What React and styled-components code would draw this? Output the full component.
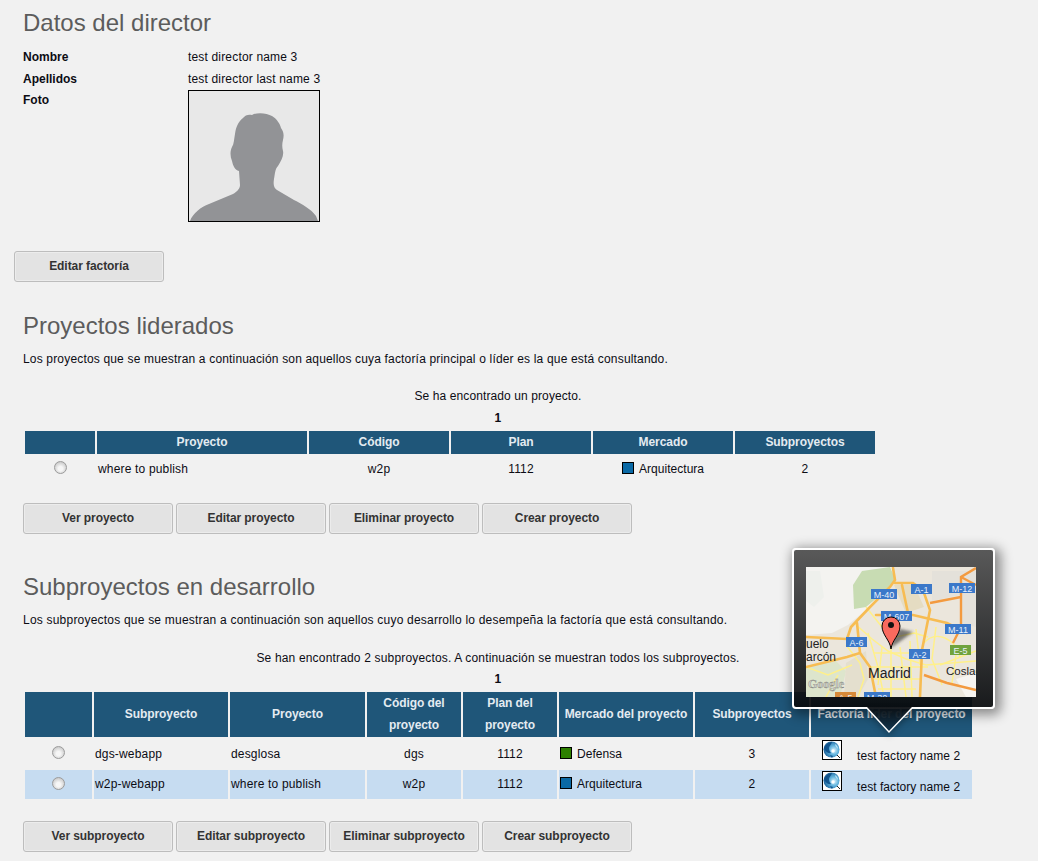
import React from 'react';
import styled, { createGlobalStyle } from 'styled-components';

const Global = createGlobalStyle`
  html, body { margin: 0; padding: 0; background: #f1f1f1; }
  body { font-family: "Liberation Sans", Arial, sans-serif; font-size: 12px; color: #0c0c14; letter-spacing: .17px; }
  svg { letter-spacing: 0; }
`;
const Page = styled.div`
  position: relative;
  width: 1038px;
  height: 861px;
  overflow: hidden;
  padding: 9px 0 0 14px;
  box-sizing: border-box;
`;
const Content = styled.div`
  width: 950px;
  margin-left: 9px;
`;
const Title = styled.h2`
  margin: ${p => p.$top || 0}px 0 0;
  font-size: 24px;
  line-height: 28px;
  font-weight: normal;
  letter-spacing: 0;
  color: #5c5c5c;
`;
const Details = styled.div`
  display: grid;
  grid-template-columns: 165px 1fr;
  grid-auto-rows: 22px;
  margin-top: 9px;
  align-items: center;
`;
const Label = styled.div`
  font-weight: bold;
  letter-spacing: 0;
  line-height: 22px;
`;
const Value = styled.div`
  line-height: 22px;
`;
const PhotoRow = styled.div`
  display: grid;
  grid-template-columns: 165px 1fr;
`;
const FotoLabel = styled.div`
  font-weight: bold;
  letter-spacing: 0;
  line-height: 20px;
`;
const PhotoFrame = styled.div`
  width: 130px;
  height: 130px;
  border: 1px solid #000;
  background: #e8e8e8;
  svg { display: block; }
`;
const Buttons = styled.div`
  display: flex;
  gap: 3px;
  margin-top: ${p => p.$top}px;
`;
const Button = styled.button`
  width: 150px;
  height: 31px;
  box-sizing: border-box;
  padding: 0 0 2px;
  border: 1px solid #bdbdbd;
  border-radius: 3px;
  background: #e3e3e3;
  box-shadow: inset 0 0 0 1px #ececec;
  color: #333;
  font: bold 12px "Liberation Sans", Arial, sans-serif;
  letter-spacing: -.07px;
`;
const Intro = styled.p`
  margin: 11px 0 0;
  line-height: 16px;
  letter-spacing: ${p => p.$spacing}px;
`;
const Count = styled.div`
  margin-top: ${p => p.$top}px;
  text-align: center;
  line-height: 16px;
  letter-spacing: ${p => p.$spacing}px;
`;
const PageNum = styled.div`
  margin-top: ${p => p.$top}px;
  text-align: center;
  font-weight: bold;
  line-height: 16px;
`;
const Table = styled.table`
  border-collapse: separate;
  border-spacing: 2px;
  table-layout: fixed;
  width: ${p => p.$width}px;
  margin-top: 3px;
`;
const Th = styled.th`
  background: #1f5679;
  color: #e4ebf1;
  font-size: 12px;
  font-weight: bold;
  letter-spacing: -.07px;
  line-height: 22px;
  padding: 0 0 1px;
  text-align: center;
`;
const Tr = styled.tr`
  background: ${p => (p.$alt ? '#c6dcf1' : 'transparent')};
`;
const Td = styled.td`
  height: ${p => p.$h}px;
  padding: 0 0 ${p => (p.$lift ? 2 : 0)}px ${p => (p.$center ? 0 : 1)}px;
  box-sizing: border-box;
  text-align: ${p => (p.$center ? 'center' : 'left')};
  vertical-align: ${p => (p.$top ? 'top' : 'middle')};
  font-size: 12px;
  background: inherit;
`;
const Radio = styled.span`
  display: block;
  width: 13px;
  height: 13px;
  margin: -3px auto 0;
  border-radius: 50%;
  box-sizing: border-box;
  border: 1px solid #9b9b9b;
  background: radial-gradient(circle at 50% 60%, #f6f6f6 0 25%, #c4c4c4 85%);
`;
const Market = styled.div`
  display: flex;
  align-items: center;
  gap: 5px;
  padding-left: ${p => p.$pad}px;
  letter-spacing: .03px;
`;
const Swatch = styled.span`
  width: 10px;
  height: 10px;
  border: 1px solid #000;
  background: ${p => p.$color};
  margin-top: -2px;
`;
const Factory = styled.div`
  display: flex;
  align-items: flex-start;
  gap: 15px;
  height: 27px;
  padding-left: 10px;
`;
const FactoryName = styled.span`
  padding-top: 10px;
  line-height: 15px;
  letter-spacing: .06px;
`;
const GlobeBox = styled.span`
  display: block;
  width: 20px;
  height: 20px;
  box-sizing: border-box;
  border: 1px solid #000;
  background: #fff;
  margin-top: 1px;
  svg { display: block; }
`;
const Popover = styled.div`
  position: absolute;
  left: 792px;
  top: 548px;
  width: 203px;
  height: 161px;
  box-sizing: border-box;
  padding: 17px 0 0 12px;
  border: 2px solid #fff;
  border-radius: 4px;
  background: linear-gradient(rgba(84,84,84,.97), rgba(8,10,12,.93));
  box-shadow: 3px 3px 12px 3px rgba(0,0,0,.42);
  svg { display: block; }
`;
const Arrow = styled.svg`
  position: absolute;
  left: 864px;
  top: 707px;
  filter: drop-shadow(0 3px 3px rgba(0,0,0,.3));
`;

const Silhouette = () => (
  <svg width="130" height="130" viewBox="0 0 130 130">
    <path fill="#929396" d="M1 130C4 122 12 116 20 113L44 103C49 100 51 97 51 94L50 80C46 79 44 75 43 70C41 65 41 60 43 56C45 53 45 48 46 43C47 36 49 31 54 27C56 24 60 23 63 24C68 21 78 22 83 25C88 28 91 33 92 37C95 41 95 45 94 49C93 53 93 56 94 60C95 65 92 70 89 75C86 78 86 83 85 88C84 94 85 97 88 99L105 109C113 113 122 118 127 125L129 130Z" />
  </svg>
);

const Globe = () => (
  <svg width="18" height="18" viewBox="0 0 18 18">
    <defs>
      <radialGradient id="gl" cx="65%" cy="55%" r="70%">
        <stop offset="0" stopColor="#dff3fb" />
        <stop offset=".4" stopColor="#62b4de" />
        <stop offset="1" stopColor="#0a4f8a" />
      </radialGradient>
    </defs>
    <circle cx="8.5" cy="8.5" r="8" fill="url(#gl)" />
    <path d="M1 7c2-4 5-6 8-6-1 3-3 4-3 6s1 4 2 5c-3 1-6-2-7-5zM7 14l3 1-1 2z" fill="#094a85" opacity=".85" />
    <path d="M12 3c2 1 3 3 3 5-1-1-3-3-3-5z" fill="#b8e2f5" />
    <circle cx="10" cy="10" r="1.7" fill="#fff" />
    <path d="M14 14l3 3" stroke="#222" strokeWidth="1" />
  </svg>
);

const Shield = ({ x, y, w, t, fill = '#3b78c9', h = 10 }) => (
  <g>
    <rect x={x} y={y} width={w} height={h} fill={fill} />
    <text x={x + w / 2} y={y + 8.5} textAnchor="middle" fontSize="9" fill="#e8f0fa" fontFamily="Liberation Sans, Arial, sans-serif">{t}</text>
  </g>
);

const MapImage = () => (
  <svg width="170" height="130" viewBox="0 0 170 130">
    <defs>
      <filter id="soft"><feGaussianBlur stdDeviation="1.4" /></filter>
    </defs>
    <rect width="170" height="130" fill="#ebe6dc" />
    <path d="M0 0H88L66 38 42 58 26 66 0 68Z" fill="#f4f3f0" />
    <path d="M47 18L56 4 84 0 90 14 72 30 60 40 48 42Z" fill="#c8dcb3" />
    <path d="M0 4H14L18 30 8 40 0 34Z" fill="#eef0ec" />
    <path d="M0 100L30 94 40 104 34 130H0Z" fill="#dde5cc" />
    <path d="M88 18L108 18 118 40 100 46Z" fill="#e5dcc2" />
    <path d="M126 4H170V60L156 56 154 28 126 34Z" fill="#e4e1da" />
    <path d="M150 112L170 106V130H160Z" fill="#f6f4f0" />
    <path d="M40 96L60 84 62 112 52 130H38Z" fill="#e4dfce" />
    <g fill="none" stroke="#fff08a" strokeWidth="1.5">
      <path d="M40 78L54 96 58 112 52 130" />
      <path d="M48 56L66 72 82 84 100 92 120 98 170 94" />
      <path d="M62 66L72 100 78 130" />
      <path d="M85 76V130" />
      <path d="M68 86H118M64 100H122M66 112H114M72 122H110" />
      <path d="M94 80L100 130" />
      <path d="M76 80L72 118M104 74L106 130" />
      <path d="M110 62L114 98" />
      <path d="M118 76C130 62 150 72 154 90" />
      <path d="M0 100L22 108 46 98" />
      <path d="M20 130L32 108" />
      <path d="M126 92L136 118M150 88L146 116M134 98L170 84" />
      <path d="M76 60L90 70 108 66 122 70" />
      <path d="M130 60L126 92" />
      <path d="M60 40L76 60" />
    </g>
    <g fill="none" stroke="#f7bc52" strokeWidth="2.6" strokeLinecap="round">
      <path d="M0 70L41 72 45 60 64 40 84 20 89 13 87 1" />
      <path d="M89 16H107L117 23 124 43 116 83 114 130" />
      <path d="M51 56L54 86 64 100 70 130" />
      <path d="M70 48L107 48 141 56 161 66" />
      <path d="M0 100L41 90 54 86" />
      <path d="M96 18L102 46" />
    </g>
    <g fill="none" stroke="#f39a3f" strokeWidth="2.4">
      <path d="M170 1L155 10V60L147 76" />
      <path d="M124 36L155 30" />
      <path d="M141 116L170 123M118 108L141 116" />
      <path d="M155 10L170 18" />
    </g>
    <path d="M85 81L107 65 94 62 88 68Z" fill="#2c2c2c" opacity=".6" filter="url(#soft)" />
    <Shield x={65} y={22} w={26} t="M-40" />
    <Shield x={105} y={17} w={21} t="A-1" />
    <Shield x={143} y={16} w={26} t="M-12" />
    <Shield x={75} y={44} w={31} t="M-607" />
    <Shield x={139} y={57} w={26} t="M-11" />
    <Shield x={40} y={70} w={21} t="A-6" />
    <Shield x={144} y={78} w={21} t="E-5" fill="#70a33d" />
    <Shield x={103} y={82} w={21} t="A-2" />
    <Shield x={29} y={125} w={21} t="A-5" fill="#d68a3a" />
    <Shield x={58} y={125} w={26} t="M-30" />
    <g fontFamily="Liberation Sans, Arial, sans-serif" fill="#222">
      <text x="0" y="81" fontSize="12">uelo</text>
      <text x="0" y="94" fontSize="12">arcón</text>
      <text x="62" y="111" fontSize="14">Madrid</text>
      <text x="140" y="108" fontSize="11.5">Coslad</text>
    </g>
    <text x="2" y="121" fontSize="12" fontWeight="bold" fontFamily="Liberation Serif, serif" fill="#d5d5d0" stroke="#7f7f7a" strokeWidth=".4">Google</text>
    <path d="M85 82C84 73 76 68 76 59A9 9 0 0 1 94 59C94 68 86 73 85 82Z" fill="#f96a5e" stroke="#000" strokeWidth="1" />
    <circle cx="85" cy="58" r="3" fill="#111" />
  </svg>
);

const projectCols = [70, 210, 140, 140, 140, 140];
const subCols = [67, 134, 135, 94, 94, 134, 114, 161];

const Colgroup = ({ cols }) => (
  <colgroup>{cols.map((w, i) => <col key={i} style={{ width: w }} />)}</colgroup>
);

const SubRow = ({ alt, name, project, code, market, color, subs, h }) => (
  <Tr $alt={alt}>
    <Td $h={h} $center><Radio /></Td>
    <Td $h={h} $lift={alt}>{name}</Td>
    <Td $h={h} $lift={alt}>{project}</Td>
    <Td $h={h} $center $lift={alt}>{code}</Td>
    <Td $h={h} $center $lift={alt}>1112</Td>
    <Td $h={h} $lift={alt}><Market $pad={0}><Swatch $color={color} />{market}</Market></Td>
    <Td $h={h} $center $lift={alt}>{subs}</Td>
    <Td $h={h} $top><Factory><GlobeBox><Globe /></GlobeBox><FactoryName>test factory name 2</FactoryName></Factory></Td>
  </Tr>
);

export default function App() {
  return (
    <Page>
      <Global />
      <Content>
        <Title>Datos del director</Title>
        <Details>
          <Label>Nombre</Label><Value>test director name 3</Value>
          <Label>Apellidos</Label><Value>test director last name 3</Value>
        </Details>
        <PhotoRow>
          <FotoLabel>Foto</FotoLabel>
          <PhotoFrame><Silhouette /></PhotoFrame>
        </PhotoRow>
      </Content>
      <Buttons $top={29}><Button>Editar factoría</Button></Buttons>
      <Content>
        <Title $top={30}>Proyectos liderados</Title>
        <Intro $spacing={0.17}>Los proyectos que se muestran a continuación son aquellos cuya factoría principal o líder es la que está consultando.</Intro>
        <Count $top={21} $spacing={0.1}>Se ha encontrado un proyecto.</Count>
        <PageNum $top={6}>1</PageNum>
        <Table $width={854}>
          <Colgroup cols={projectCols} />
          <thead>
            <tr>
              <Th /><Th>Proyecto</Th><Th>Código</Th><Th>Plan</Th><Th>Mercado</Th><Th>Subproyectos</Th>
            </tr>
          </thead>
          <tbody>
            <Tr>
              <Td $h={25} $center><Radio /></Td>
              <Td $h={25}>where to publish</Td>
              <Td $h={25} $center>w2p</Td>
              <Td $h={25} $center>1112</Td>
              <Td $h={25}><Market $pad={28}><Swatch $color="#0a69a5" />Arquitectura</Market></Td>
              <Td $h={25} $center>2</Td>
            </Tr>
          </tbody>
        </Table>
        <Buttons $top={20}>
          <Button>Ver proyecto</Button><Button>Editar proyecto</Button><Button>Eliminar proyecto</Button><Button>Crear proyecto</Button>
        </Buttons>
        <Title $top={39}>Subproyectos en desarrollo</Title>
        <Intro $spacing={0.21}>Los subproyectos que se muestran a continuación son aquellos cuyo desarrollo lo desempeña la factoría que está consultando.</Intro>
        <Count $top={22} $spacing={0.17}>Se han encontrado 2 subproyectos. A continuación se muestran todos los subproyectos.</Count>
        <PageNum $top={5}>1</PageNum>
        <Table $width={951}>
          <Colgroup cols={subCols} />
          <thead>
            <tr>
              <Th /><Th>Subproyecto</Th><Th>Proyecto</Th><Th>Código del proyecto</Th><Th>Plan del proyecto</Th><Th>Mercado del proyecto</Th><Th>Subproyectos</Th><Th>Factoría líder del proyecto</Th>
            </tr>
          </thead>
          <tbody>
            <SubRow h={29} name="dgs-webapp" project="desglosa" code="dgs" market="Defensa" color="#2d8000" subs="3" />
            <SubRow h={29} alt name="w2p-webapp" project="where to publish" code="w2p" market="Arquitectura" color="#0a69a5" subs="2" />
          </tbody>
        </Table>
        <Buttons $top={20}>
          <Button>Ver subproyecto</Button><Button>Editar subproyecto</Button><Button>Eliminar subproyecto</Button><Button>Crear subproyecto</Button>
        </Buttons>
      </Content>
      <Popover><MapImage /></Popover>
      <Arrow width="50" height="28" viewBox="0 0 50 28">
        <defs>
          <linearGradient id="arrowFill" x1="0" y1="0" x2="0" y2="1">
            <stop offset="0" stopColor="#0a0d10" stopOpacity=".94" />
            <stop offset="1" stopColor="#12344c" stopOpacity=".85" />
          </linearGradient>
        </defs>
        <path d="M2 0L25 25 49 0Z" fill="url(#arrowFill)" />
        <path d="M2 0L25 25 49 0" fill="none" stroke="#fff" strokeWidth="1.5" />
      </Arrow>
    </Page>
  );
}
